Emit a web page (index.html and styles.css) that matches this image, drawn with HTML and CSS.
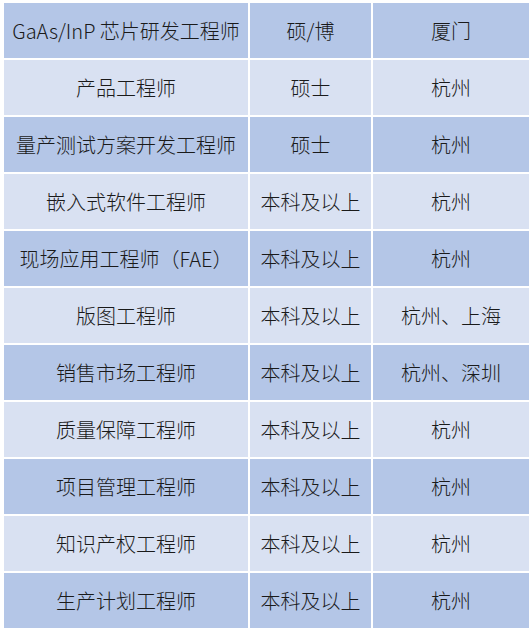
FILE: index.html
```html
<!DOCTYPE html>
<html lang="zh-CN">
<head>
<meta charset="utf-8">
<title>招聘职位</title>
<link rel="stylesheet" href="styles.css">
</head>
<body>
<table class="jobs">
  <colgroup>
    <col class="c-title">
    <col class="c-degree">
    <col class="c-city">
  </colgroup>
  <tbody>
    <tr class="dark"><td>GaAs/InP 芯片研发工程师</td><td>硕/博</td><td>厦门</td></tr>
    <tr class="light"><td>产品工程师</td><td>硕士</td><td>杭州</td></tr>
    <tr class="dark"><td>量产测试方案开发工程师</td><td>硕士</td><td>杭州</td></tr>
    <tr class="light"><td>嵌入式软件工程师</td><td>本科及以上</td><td>杭州</td></tr>
    <tr class="dark"><td>现场应用工程师（FAE）</td><td>本科及以上</td><td>杭州</td></tr>
    <tr class="light"><td>版图工程师</td><td>本科及以上</td><td>杭州、上海</td></tr>
    <tr class="dark"><td>销售市场工程师</td><td>本科及以上</td><td>杭州、深圳</td></tr>
    <tr class="light"><td>质量保障工程师</td><td>本科及以上</td><td>杭州</td></tr>
    <tr class="dark"><td>项目管理工程师</td><td>本科及以上</td><td>杭州</td></tr>
    <tr class="light"><td>知识产权工程师</td><td>本科及以上</td><td>杭州</td></tr>
    <tr class="dark"><td>生产计划工程师</td><td>本科及以上</td><td>杭州</td></tr>
  </tbody>
</table>
</body>
</html>
```

FILE: styles.css
```css
html, body {
  margin: 0;
  padding: 0;
  background: #ffffff;
  overflow: hidden;
}

body {
  font-family: "Noto Sans CJK SC", "Noto Sans", sans-serif;
  color: #1a1a1a;
}

.jobs {
  border-collapse: separate;
  border-spacing: 2px;
  table-layout: fixed;
  width: 529px;
  margin: 1px 0 0 2px;
}

.c-title { width: 244px; }
.c-degree { width: 121px; }
.c-city { width: 156px; }

.jobs td {
  height: 55px;
  padding: 0;
  text-align: center;
  vertical-align: middle;
  white-space: nowrap;
  font-size: 20px;
  font-weight: 300;
  line-height: 24px;
}

.dark td { background: #b4c6e7; }
.light td { background: #d9e1f2; }
```
